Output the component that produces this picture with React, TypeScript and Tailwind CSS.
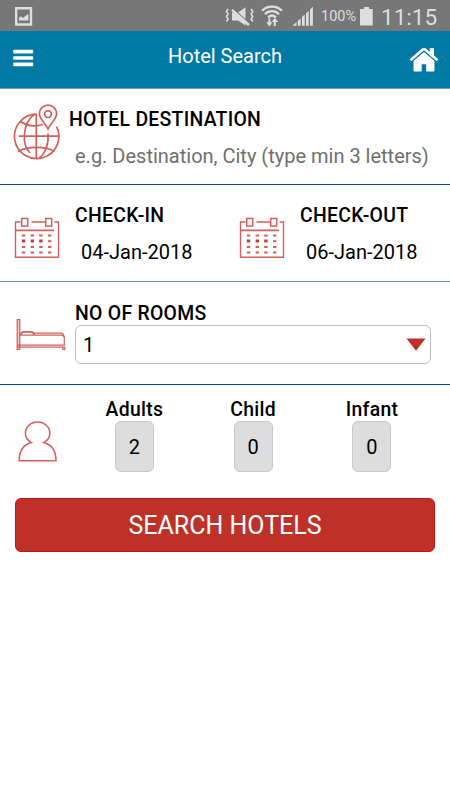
type IconProps = { className?: string };

const dates = [
  { label: "CHECK-IN", value: "04-Jan-2018" },
  { label: "CHECK-OUT", value: "06-Jan-2018" },
];

const guests = [
  { label: "Adults", value: 2 },
  { label: "Child", value: 0 },
  { label: "Infant", value: 0 },
];

function PictureIcon({ className }: IconProps) {
  return (
    <svg width="18" height="20" viewBox="0 0 18 20" className={className}>
      <path d="M1.2 1.2H16V17.5H1.2Z" fill="none" stroke="#dedede" strokeWidth="2.4" />
      <path d="M4 13.5V11L6 9.3L8 11L12.5 7.2L13.4 8V13.5Z" fill="#dedede" />
    </svg>
  );
}

function MuteIcon({ className }: IconProps) {
  return (
    <svg width="30" height="20" viewBox="0 0 30 20" className={className}>
      <path d="M7 5.5H13L20.5 0.2V18.5L13 13.5H7Z" fill="#dedede" />
      <path d="M9 2.5L25 17" stroke="#777" strokeWidth="1.2" />
      <path d="M7 2.8L24 18" stroke="#dedede" strokeWidth="2.4" />
      <path
        d="M3.2 2L1.4 4.5L3.2 7L1.4 9.5L3.2 12L1.4 14.5M26 2L27.8 4.5L26 7L27.8 9.5L26 12L27.8 14.5"
        fill="none"
        stroke="#dedede"
        strokeWidth="1.5"
      />
    </svg>
  );
}

function WifiIcon({ className }: IconProps) {
  return (
    <svg width="22" height="23" viewBox="0 0 22 23" className={className}>
      <g fill="none" stroke="#dedede" strokeWidth="2.2">
        <path d="M1 5.7C6.5 0.2 15.5 0.2 21 5.7" />
        <path d="M4 9.2C8 5.2 14 5.2 18 9.2" />
        <path d="M7 12.4C9.5 10 12.5 10 15 12.4" />
      </g>
      <path d="M7.4 13.2H9.4V17.2H11.4L8.4 21.5L5.2 17.2H7.4Z" fill="#dedede" />
      <path d="M12.8 21H14.8V17H17.2L13.8 12.8L10.8 17H12.8Z" fill="#dedede" />
    </svg>
  );
}

function SignalIcon({ className }: IconProps) {
  return (
    <svg width="22" height="20" viewBox="0 0 22 20" className={className} fill="#dedede">
      <path d="M0.5 19.8L4.5 16V19.8Z" />
      <path d="M5.8 15L8.6 12.3V19.8H5.8Z" />
      <path d="M10 11L12.7 8.4V19.8H10Z" />
      <path d="M14 7.4L16.7 4.8V19.8H14Z" />
      <path d="M18 3.6L20.9 0.8V19.8H18Z" />
    </svg>
  );
}

function BatteryIcon({ className }: IconProps) {
  return (
    <svg width="13" height="19" viewBox="0 0 13 19" className={className}>
      <path d="M4 0H9V2H12.7V18.5H0V2H4Z" fill="#dedede" />
    </svg>
  );
}

function MenuIcon() {
  return (
    <svg width="21" height="18" viewBox="0 0 21 18" fill="#fff">
      <rect x="0.2" y="0.8" width="20" height="3.6" rx="0.8" />
      <rect x="0.2" y="7.2" width="20" height="3.6" rx="0.8" />
      <rect x="0.2" y="13.6" width="20" height="3.6" rx="0.8" />
    </svg>
  );
}

function HomeIcon() {
  return (
    <svg width="30" height="26" viewBox="0 0 30 26">
      <path d="M20.7 1.2H25V11H20.7Z" fill="#fff" />
      <path d="M4.5 13.4L15 4.6L25.5 13.4V23.6Q25.5 24.6 24.5 24.6H17.2V17.2H12.7V24.6H5.5Q4.5 24.6 4.5 23.6Z" fill="#fff" />
      <path d="M2.4 14.8L15 4.4L27.6 14.8" fill="none" stroke="#007aa5" strokeWidth="1.2" />
      <path d="M1.4 13.2L13.9 2.6Q15 1.8 16.1 2.6L28.6 13.2" fill="none" stroke="#fff" strokeWidth="2.6" />
    </svg>
  );
}

function DestinationIcon({ className }: IconProps) {
  return (
    <svg width="48" height="57" viewBox="0 0 48 57" className={className} fill="none" stroke="#d2605a" strokeWidth="1.7">
      <path d="M24.5 11.2A22.2 22.2 0 1 0 44.6 23.6" />
      <path d="M24.3 11V55.5M7 33.2H46.5" />
      <path d="M22 11.5C11 20 9 41 18 50" />
      <path d="M27 55C33 51 37 41 36 30.5" />
      <path d="M8.5 18.5C14 23 23 24 31 21.5" />
      <path d="M6 48.5C15 43 34 43 42.5 48.5" />
      <path d="M36 26C33.5 20.5 27.4 16 27.4 10.8A8.6 8.6 0 0 1 44.6 10.8C44.6 16 38.5 20.5 36 26Z" />
      <circle cx="36" cy="11" r="3.4" />
    </svg>
  );
}

function CalendarIcon({ className }: IconProps) {
  return (
    <svg width="46" height="42" viewBox="0 0 46 42" className={className} fill="none" stroke="#d2605a">
      <path d="M6.5 5H1.5V40.3H44.5V5H40.5M17.5 5H31" strokeWidth="1.4" />
      <rect x="7.7" y="1.5" width="6" height="7.5" strokeWidth="1.5" />
      <rect x="31.7" y="1.5" width="6" height="7.5" strokeWidth="1.5" />
      <path d="M1.5 13.3H40" strokeWidth="1.8" />
      <path
        d="M7.8 18.5H11.2M16.6 18.5H20M25.2 18.5H28.6M34 18.5H37.4M34 24.3H37.4M7.8 30H11.2M16.6 30H20M25.2 30H28.6M34 30H37.4M7.8 35.5H11.2M16.6 35.5H20M25.2 35.5H28.6M34 35.5H37.4"
        strokeWidth="1.9"
      />
      <path d="M7.8 24H11.2M16.6 24H20M25.2 24H28.6" stroke="#c83c35" strokeWidth="3" />
    </svg>
  );
}

function BedIcon({ className }: IconProps) {
  return (
    <svg width="50" height="34" viewBox="0 0 50 34" className={className} fill="none" stroke="#d2605a">
      <path d="M1.2 1.5H3.8V31.5H1.2Z" strokeWidth="1.2" fill="#efc4c1" />
      <path d="M4 17.2H44Q48.3 17.2 48.3 20V27" strokeWidth="1.2" />
      <path d="M18 15.2H44.5Q47.5 15.2 48.3 19" strokeWidth="1.2" />
      <path d="M5 17C5 14.5 6 13.8 8.5 13.8H14.5C17 13.8 18 15 18.3 17.2" strokeWidth="1.8" />
      <path d="M1 27.2H48.8M1 29.2H48.8V31.5H46.8V29.2" strokeWidth="1.2" />
    </svg>
  );
}

function PersonIcon({ className }: IconProps) {
  return (
    <svg width="40" height="42" viewBox="0 0 40 42" className={className} fill="none" stroke="#dc5f5a" strokeWidth="1.6">
      <path d="M13.4 21.6C4.5 24 1.2 31 1.2 39.8H38C38 31 34.7 24 25.8 21.6C29.4 19.6 31.8 16 31.8 12.2C31.8 6 26.4 1 19.6 1S7.4 6 7.4 12.2C7.4 16 9.8 19.6 13.4 21.6Z" />
    </svg>
  );
}

function StatusBar() {
  return (
    <div className="flex h-[31px] items-start bg-[#777] text-[#dedede]">
      <PictureIcon className="ml-[15px] mt-[7px]" />
      <MuteIcon className="ml-[192px] mt-[7px]" />
      <WifiIcon className="ml-[6px] mt-[5px]" />
      <SignalIcon className="ml-[9px] mt-[6px]" />
      <span className="ml-[7px] mt-[7px] w-[35px] whitespace-nowrap text-[14.5px] leading-5">100%</span>
      <BatteryIcon className="ml-[4px] mt-[7px]" />
      <span className="ml-[8px] mt-[5px] whitespace-nowrap text-[22.5px] leading-6">11:15</span>
    </div>
  );
}

function Header() {
  return (
    <header className="flex h-[58px] items-start justify-between border-b border-[#6b9fc0] bg-[#007aa5] pl-[13px] pr-[11px]">
      <button className="mt-[18px]" aria-label="Menu">
        <MenuIcon />
      </button>
      <h1 className="ml-[7px] mt-[13px] text-[20px] leading-6 text-white">Hotel Search</h1>
      <button className="mt-[16px]" aria-label="Home">
        <HomeIcon />
      </button>
    </header>
  );
}

export default function App() {
  return (
    <div className="min-h-[800px] w-[450px] bg-white font-['Roboto',sans-serif] text-black">
      <StatusBar />
      <Header />

      <section className="flex h-[96px] items-start border-b border-[#00508f]">
        <DestinationIcon className="ml-[12px] mt-[14px]" />
        <div className="ml-[9px] mt-[19px]">
          <h2 className="text-[19.4px] font-medium leading-6 tracking-[0.28px]">HOTEL DESTINATION</h2>
          <p className="ml-[6px] mt-[12px] whitespace-nowrap text-[20px] leading-6 text-[#6f6f6f]">
            e.g. Destination, City (type min 3 letters)
          </p>
        </div>
      </section>

      <section className="grid h-[97px] grid-cols-2 border-b border-[#6494b6]">
        {dates.map((date) => (
          <div key={date.label} className="flex items-start">
            <CalendarIcon className="ml-[14px] mt-[32px]" />
            <div className="ml-[15px] mt-[19px]">
              <h2 className="text-[19.4px] font-medium leading-6 tracking-[0.28px]">{date.label}</h2>
              <p className="ml-[6px] mt-[12px] whitespace-nowrap text-[20px] leading-6">{date.value}</p>
            </div>
          </div>
        ))}
      </section>

      <section className="flex h-[103px] items-start border-b border-[#00508f]">
        <BedIcon className="ml-[16px] mt-[36px]" />
        <div className="ml-[9px] mt-[21px] w-[356px]">
          <h2 className="text-[19.4px] font-medium leading-[22px] tracking-[0.28px]">NO OF ROOMS</h2>
          <div className="flex h-[39px] items-center justify-between rounded-md border border-[#bdbdbd] pl-[7px] pr-[4px]">
            <span className="text-[20px] leading-6">1</span>
            <svg width="20" height="13" viewBox="0 0 20 13">
              <path d="M0.5 0.5H19.5L10 12.8Z" fill="#be3028" />
            </svg>
          </div>
        </div>
      </section>

      <section className="flex items-start">
        <PersonIcon className="ml-[18px] mt-[36px]" />
        <div className="ml-[17px] mt-[14px] grid grid-cols-3">
          {guests.map((guest) => (
            <div key={guest.label} className="flex w-[118.8px] flex-col items-center">
              <span className="text-[19.4px] font-medium leading-[22px] tracking-[0.28px]">{guest.label}</span>
              <span className="flex h-[51px] w-[39px] items-center justify-center rounded-md border border-[#c8c8c8] bg-[#ddd] text-[20px]">
                {guest.value}
              </span>
            </div>
          ))}
        </div>
      </section>

      <button className="ml-[15px] mt-[26px] block h-[54px] w-[420px] rounded-md border border-[#bf1510] bg-[#be3128] text-[25px] leading-none text-white">
        SEARCH HOTELS
      </button>
    </div>
  );
}
